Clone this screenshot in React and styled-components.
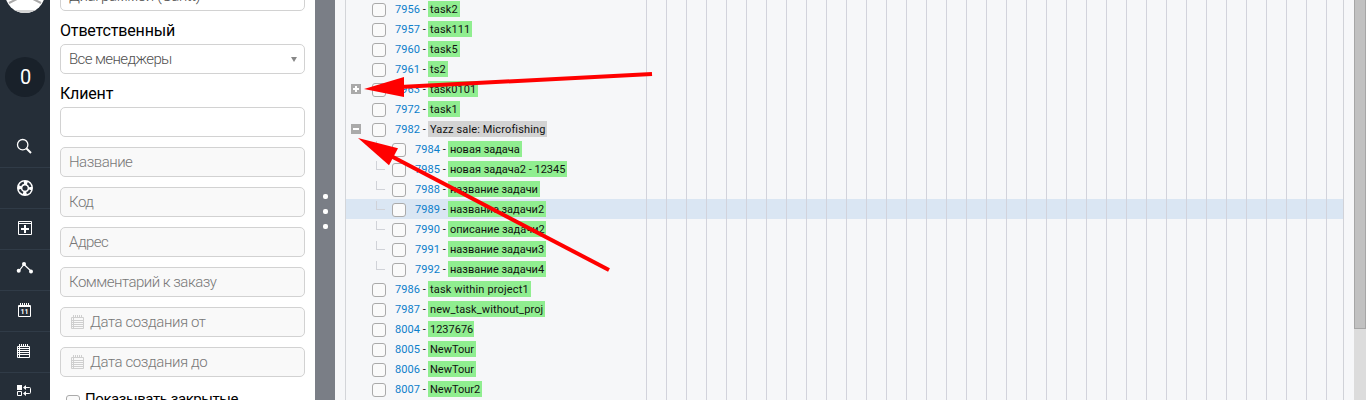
import React from 'react';
import styled, { createGlobalStyle } from 'styled-components';

const Global = createGlobalStyle`
  * { box-sizing: border-box; }
  body { margin: 0; overflow: hidden; background: #fff; font-family: Roboto, sans-serif; }
`;

const Page = styled.div`
  position: relative;
  display: flex;
  width: 1366px;
  height: 400px;
  overflow: hidden;
`;

const Nav = styled.nav`
  flex: none;
  width: 50px;
  height: 400px;
  overflow: hidden;
  background: #252e38;
  display: flex;
  flex-direction: column;
  align-items: center;
`;

const Avatar = styled.div`
  flex: none;
  width: 40px;
  height: 40px;
  margin-top: -27px;
  border-radius: 50%;
  overflow: hidden;
  background: #fff;
  svg { display: block; }
`;

const Counter = styled.div`
  flex: none;
  width: 40px;
  height: 40px;
  margin: 44px 0 30px;
  border-radius: 50%;
  background: #19212a;
  color: #fff;
  font-size: 20px;
  line-height: 40px;
  padding-left: 1px;
  text-align: center;
`;

const NavItem = styled.a`
  flex: none;
  display: block;
  width: 50px;
  height: 41px;
  border-bottom: 1px solid #303b47;
  svg { display: block; }
`;

const Filters = styled.form`
  flex: none;
  width: 265px;
  height: 400px;
  overflow: hidden;
  padding: 0 10px;
  background: #fff;
`;

const FieldLabel = styled.label`
  display: block;
  height: 33px;
  padding-top: 5px;
  font-size: 16px;
  letter-spacing: -0.16px;
  line-height: 30px;
  color: #000;
`;

const Field = styled.div`
  display: flex;
  align-items: center;
  height: 30px;
  margin-top: ${p => p.$top || 0}px;
  padding: 0 8px;
  border: 1px solid #d2d2d2;
  border-radius: 5px;
  background: ${p => (p.$muted ? '#f9f9f9' : '#fff')};
  color: ${p => (p.$muted ? '#777' : '#505050')};
  font-size: 15px;
  font-weight: 300;
  letter-spacing: ${p => p.$spacing || -0.5}px;
  white-space: nowrap;
  svg { flex: none; margin: 0 6px 0 2px; }
`;

const Caret = styled.span`
  margin-left: auto;
  margin-right: -1px;
  border: 3px solid transparent;
  border-top: 5px solid #888;
  border-bottom: 0;
`;

const CheckLine = styled.label`
  display: flex;
  align-items: flex-start;
  gap: 5px;
  padding: 12px 0 0 6px;
  font-size: 15px;
  letter-spacing: -0.43px;
  line-height: 20px;
`;

const Checkbox = styled.span`
  flex: none;
  width: 14px;
  height: 14px;
  margin-top: ${p => p.$top || 0}px;
  border: 1px solid #aaa;
  border-radius: 3px;
  background: #fafafa;
`;

const Splitter = styled.div`
  flex: none;
  width: 20px;
  height: 400px;
  padding: 23px 0 0 1px;
  background: #7a7e86;
  display: flex;
  flex-direction: column;
  justify-content: center;
  align-items: center;
  gap: 10px;
`;

const Dot = styled.i`
  flex: none;
  width: 5px;
  height: 5px;
  border-radius: 2px;
  background: #fff;
`;

const Main = styled.main`
  flex: 1;
  min-width: 0;
  padding-left: 10px;
  background: #f6f7f9;
  display: flex;
  justify-content: space-between;
`;

const Chart = styled.div`
  width: 999px;
  height: 400px;
  overflow: hidden;
  border-left: 1px solid #d3d5d9;
  border-right: 1px solid #d0d2d8;
`;

const Row = styled.div`
  display: flex;
  height: 20px;
  background: ${p => (p.$active ? '#dae6f3' : 'transparent')};
  &:first-child { margin-top: -1px; }
`;

const TreeCell = styled.div`
  flex: none;
  display: flex;
  align-items: flex-start;
  width: 301px;
  border-right: 1px solid #d2d3dc;
  font-size: 11px;
  line-height: 18px;
  color: #111;
  white-space: nowrap;
`;

const GridCells = styled.div`
  flex: 1;
  background: repeating-linear-gradient(to right, transparent 0 19px, #d2d3dc 19px 20px);
`;

const Toggle = styled.span`
  flex: none;
  width: 21px;
  height: 20px;
  padding: 5px 0 0 5px;
  svg { display: block; }
`;

const Elbow = styled.span`
  flex: none;
  width: 9px;
  height: 9px;
  margin: 2px 6px 0 9px;
  border-left: 1px solid #d0d2d8;
  border-bottom: 1px solid #d0d2d8;
`;

const CheckSlot = styled.span`
  flex: none;
  width: ${p => (p.$child ? 24 : 28)}px;
  padding: 4px 0 0 ${p => (p.$child ? 1 : 5)}px;
`;

const Box = styled(Checkbox)`
  display: block;
`;

const TaskId = styled.span`
  flex: none;
  width: 33px;
  padding-top: 2px;
  letter-spacing: 0.05px;
  color: #0d80cb;
  b { font-weight: 400; color: #111; }
`;

const Task = styled.span`
  flex: none;
  width: ${p => p.$width}px;
  height: 16px;
  margin-top: 2px;
  padding: 0 2px;
  letter-spacing: ${p => p.$spacing}px;
  background: ${p => (p.$project ? '#d3d3d3' : '#90ee90')};
`;

const Scrollbar = styled.div`
  flex: none;
  width: 12px;
  height: 400px;
  background: #dcdcdc;
`;

const Thumb = styled.div`
  height: 329px;
  background: #c1c1c1;
  border: 1px solid #a6a6a6;
  border-top: 0;
`;

const Arrows = styled.svg`
  position: absolute;
  left: 0;
  top: 0;
  pointer-events: none;
`;

const Notepad = () => (
  <svg width="13" height="14" viewBox="0 0 13 14" fill="none" stroke="#cfcfcf">
    <path d="M2.5 0v2M4.5 0v2M6.5 0v2M8.5 0v2M10.5 0v2M.5 2.5h12v11H.5zM0 5.5h13M0 7.5h13M0 9.5h13M0 11.5h13M2.5 3v11" />
  </svg>
);

const Icon = ({ children }) => (
  <svg width="50" height="40" viewBox="0 0 50 40" fill="none" stroke="#fff">{children}</svg>
);

const navIcons = [
  <Icon key="search">
    <circle cx="22.7" cy="17.7" r="5.2" strokeWidth="1.3" />
    <path d="M26.5 21.5L31 26" strokeWidth="2" />
  </Icon>,
  <Icon key="support">
    <circle cx="25" cy="20" r="5.3" strokeWidth="5.4" />
    <circle cx="25" cy="20" r="5.4" strokeWidth="2.3" stroke="#252e38" strokeDasharray="4.8 3.68" strokeDashoffset="-1.84" />
    <circle cx="25" cy="20" r="2.2" fill="#252e38" stroke="none" />
  </Icon>,
  <Icon key="add">
    <path d="M18.5 12.5h13v13h-13zM18 14.5h14" />
    <path d="M25 16v8M21 20h8" strokeWidth="2" />
  </Icon>,
  <Icon key="graph">
    <path d="M18.5 21.5L24 14.5L31.5 21.5" strokeWidth="1.2" />
    <g fill="#fff" stroke="none"><circle cx="18.7" cy="20.7" r="2" /><circle cx="24" cy="14" r="2" /><circle cx="31" cy="21.5" r="2" /></g>
  </Icon>,
  <Icon key="calendar">
    <path d="M20.5 12v2M22.5 12v2M24.5 12v2M26.5 12v2M28.5 12v2" />
    <path d="M18.5 14.5h12v11h-12zM18 15.5h13" />
    <text x="24.6" y="23" fontSize="7" fontWeight="700" fill="#fff" stroke="none" textAnchor="middle">11</text>
  </Icon>,
  <Icon key="list">
    <path d="M19.5 12v2M21.5 12v2M23.5 12v2M25.5 12v2M27.5 12v2M17.5 14.5h12v11h-12zM17 16.5h13M17 18.5h13M17 20.5h13M17 22.5h13M19.5 15v11" />
  </Icon>,
  <Icon key="flow">
    <path d="M17 12h5v5h-5z" fill="#fff" stroke="none" />
    <path d="M17.5 18.5h4v4h-4z" />
    <path d="M24 14.5h5.5q1 0 1 1v4q0 1-1 1H24" />
    <path d="M23 14.5l3-2.5v5zM23 20.5l3-2.5v5z" fill="#fff" stroke="none" />
  </Icon>,
];

const tasks = [
  [7956, 'task2', 32, 0.15], [7957, 'task111', 44, 0.15], [7960, 'task5', 32, 0.15], [7961, 'ts2', 20, 0.15],
  [7963, 'task0101', 50, 0.1, { toggle: 'plus' }], [7972, 'task1', 32, 0.15],
  [7982, 'Yazz sale: Microfishing', 119, 0.13, { toggle: 'minus', project: true }],
  [7984, 'новая задача', 74, 0, { child: true }],
  [7985, 'новая задача2 - 12345', 119, 0, { child: true }],
  [7988, 'название задачи', 92, 0, { child: true }],
  [7989, 'название задачи2', 98, 0, { child: true, active: true }],
  [7990, 'описание задачи2', 98, 0, { child: true }],
  [7991, 'название задачи3', 98, 0, { child: true }],
  [7992, 'название задачи4', 98, 0, { child: true }],
  [7986, 'task within project1', 103, 0.15], [7987, 'new_task_without_proj', 117, 0.1],
  [8004, '1237676', 46, 0], [8005, 'NewTour', 48, 0], [8006, 'NewTour', 48, 0], [8007, 'NewTour2', 54, 0],
];

const TaskRow = ({ id, name, width, spacing, toggle, project, child, active }) => (
  <Row $active={active}>
    <TreeCell>
      <Toggle>
        {toggle && (
          <svg width="10" height="10">
            <path d="M0 0h10v10H0z" fill="#aaa" />
            <path d={toggle === 'plus' ? 'M2 5h6M5 2v6' : 'M2 5h6'} stroke="#fff" strokeWidth="2" />
          </svg>
        )}
      </Toggle>
      {child && <Elbow />}
      <CheckSlot $child={child}><Box /></CheckSlot>
      <TaskId>{id}<b> -</b></TaskId>
      <Task $project={project} $width={width} $spacing={spacing}>{name}</Task>
    </TreeCell>
    <GridCells />
  </Row>
);

const EmptyRow = () => (
  <Row>
    <TreeCell />
    <GridCells />
  </Row>
);

export default function App() {
  return (
    <Page>
      <Global />
      <Nav>
        <Avatar>
          <svg width="40" height="40">
            <path d="M4 30L20 22L36 30" fill="none" stroke="#aaa" strokeWidth="2" />
            <path d="M0 37h40v3H0z" fill="#d4d4d4" />
          </svg>
        </Avatar>
        <Counter>0</Counter>
        {navIcons.map(icon => <NavItem key={icon.key}>{icon}</NavItem>)}
      </Nav>
      <Filters>
        <Field $top={-19} $spacing={-0.4}>Диаграммой (Gantt)</Field>
        <FieldLabel>Ответственный</FieldLabel>
        <Field $spacing={-0.6}>Все менеджеры<Caret /></Field>
        <FieldLabel>Клиент</FieldLabel>
        <Field />
        <Field $muted $top={10}>Название</Field>
        <Field $muted $top={10}>Код</Field>
        <Field $muted $top={10}>Адрес</Field>
        <Field $muted $top={10}>Комментарий к заказу</Field>
        <Field $muted $top={10} $spacing={-0.4}><Notepad />Дата создания от</Field>
        <Field $muted $top={10} $spacing={-0.4}><Notepad />Дата создания до</Field>
        <CheckLine><Checkbox $top={6} />Показывать закрытые</CheckLine>
      </Filters>
      <Splitter><Dot /><Dot /><Dot /></Splitter>
      <Main>
        <Chart>
          {tasks.map(([id, name, width, spacing, opts]) => (
            <TaskRow key={id} id={id} name={name} width={width} spacing={spacing} {...opts} />
          ))}
          <EmptyRow />
        </Chart>
        <Scrollbar><Thumb /></Scrollbar>
      </Main>
      <Arrows width="1366" height="400" fill="#f00" stroke="#f00">
        <path d="M652 74L400 87" strokeWidth="4" />
        <path d="M364 89L404 77V97z" stroke="none" />
        <path d="M609 270L390 155.5" strokeWidth="4" />
        <path d="M358 138L398 148.3L389 165.3z" stroke="none" />
      </Arrows>
    </Page>
  );
}
